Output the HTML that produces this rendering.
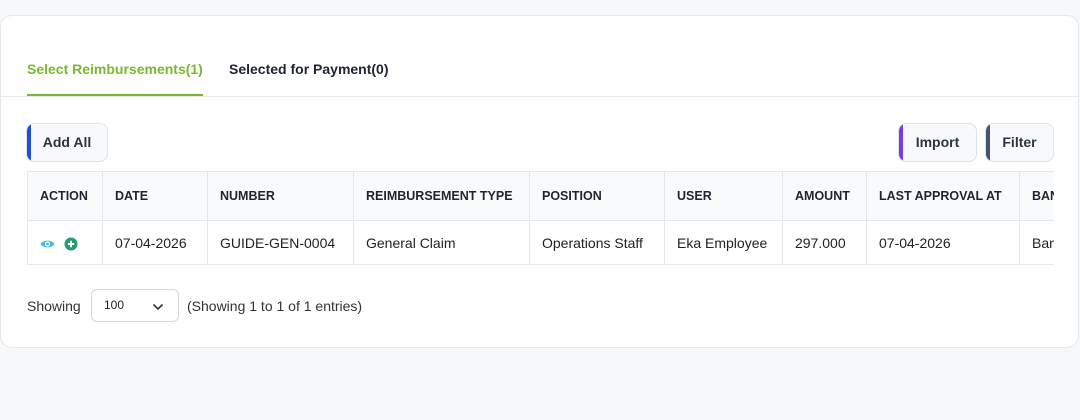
<!DOCTYPE html>
<html><head><style>
*{box-sizing:border-box;margin:0;padding:0}
body{width:1080px;height:420px;background:#f7f8fa;font-family:"Liberation Sans",sans-serif;position:relative;overflow:hidden;color:#1f2430}
.card{position:absolute;left:0;top:15px;width:1079px;height:333px;background:#fff;border:1px solid #e4e7ec;border-radius:12px}
.tab{position:absolute;top:61px;font-size:14px;font-weight:bold}
.t1{left:27px;color:#7cb82f}
.t2{left:229px;color:#1f2430}
.ul{position:absolute;left:27px;top:94px;width:176px;height:2px;background:#7cb82f}
.hr{position:absolute;left:1px;top:96px;width:1077px;height:1px;background:#e6e9ee}
.btn{position:absolute;top:123px;height:39px;border:1px solid #dde3ec;border-radius:8px;background:#f7f9fc;font-size:14px;font-weight:bold;color:#2b3444;line-height:37px;text-align:center;overflow:hidden}
.btn::before{content:"";position:absolute;left:0;top:0;bottom:0;width:4px}
.b1{left:26px;width:82px}.b1::before{background:#1d4fd8}
.b2{left:898px;width:79px}.b2::before{background:#7c3aed}
.b3{left:985px;width:69px}.b3::before{background:#475569}
.tw{position:absolute;left:27px;top:171px;width:1027px;height:94px;overflow:hidden}
table{border-collapse:collapse;table-layout:fixed;width:1100px}
td,th{border:1px solid #e4e7ec;text-align:left;padding:0 0 0 12px;white-space:nowrap;overflow:hidden}
th{height:49px;background:#f9fafb;font-size:12.5px;font-weight:bold;color:#1f2430}
td{height:44px;font-size:14px;color:#222}
.foot{position:absolute;top:298px;font-size:14px;color:#333}
.sel{position:absolute;left:91px;top:289px;width:88px;height:33px;border:1px solid #d4d8de;border-radius:6px;font-size:12px;padding:8px 0 0 12px;color:#222}
</style></head><body>
<div class="card"></div>
<div class="tab t1">Select Reimbursements(1)</div>
<div class="tab t2">Selected for Payment(0)</div>
<div class="ul"></div><div class="hr"></div>
<div class="btn b1">Add All</div>
<div class="btn b2">Import</div>
<div class="btn b3">Filter</div>
<div class="tw"><table>
<colgroup><col style="width:75px"><col style="width:105px"><col style="width:146px"><col style="width:176px"><col style="width:135px"><col style="width:118px"><col style="width:84px"><col style="width:153px"><col style="width:108px"></colgroup>
<tr><th>ACTION</th><th>DATE</th><th>NUMBER</th><th>REIMBURSEMENT TYPE</th><th>POSITION</th><th>USER</th><th>AMOUNT</th><th>LAST APPROVAL AT</th><th>BANK</th></tr>
<tr><td><svg width="40" height="14" viewBox="0 0 40 14" style="vertical-align:middle"><path d="M0.5 7C3 2.5 12 2.5 14.5 7C12 11.5 3 11.5 0.5 7Z" fill="#3ec1d3"/><circle cx="7.5" cy="7" r="2.6" fill="#fff"/><circle cx="7.5" cy="7" r="1.4" fill="#3ec1d3"/><circle cx="31" cy="7" r="6.5" fill="#21a06b"/><path d="M31 3.8v6.4M27.8 7h6.4" stroke="#fff" stroke-width="2"/></svg></td><td>07-04-2026</td><td>GUIDE-GEN-0004</td><td>General Claim</td><td>Operations Staff</td><td>Eka Employee</td><td>297.000</td><td>07-04-2026</td><td>Bank</td></tr>
</table></div>
<div class="foot" style="left:27px">Showing</div>
<div class="sel">100<svg width="12" height="8" viewBox="0 0 12 8" style="position:absolute;left:60px;top:13px"><path d="M1.5 1.5L6 6l4.5-4.5" fill="none" stroke="#333" stroke-width="1.6"/></svg></div>
<div class="foot" style="left:187px">(Showing 1 to 1 of 1 entries)</div>
</body></html>
